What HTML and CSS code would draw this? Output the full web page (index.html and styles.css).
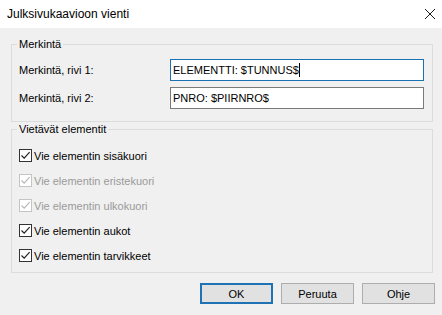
FILE: index.html
```html
<!DOCTYPE html>
<html lang="fi">
<head>
    <meta charset="UTF-8">
    <meta name="viewport" content="width=device-width, initial-scale=1.0">
    <title>Julksivukaavioon vienti</title>
    <link rel="stylesheet" href="styles.css">
</head>
<body>
    <div class="dialog">
        <div class="titlebar">
            <span class="title">Julksivukaavioon vienti</span>
            <svg class="close" width="12" height="12" viewBox="0 0 12 12">
                <path d="M1 1 L11 11 M11 1 L1 11" stroke="#1a1a1a" stroke-width="1" fill="none"/>
            </svg>
        </div>
        <div class="content">
            <fieldset class="group group-label">
                <legend>Merkintä</legend>
                <div class="field-row">
                    <label for="row1">Merkintä, rivi 1:</label>
                    <div class="textbox focused" id="row1">ELEMENTTI: $TUNNUS$<span class="caret"></span></div>
                </div>
                <div class="field-row">
                    <label for="row2">Merkintä, rivi 2:</label>
                    <div class="textbox" id="row2">PNRO: $PIIRNRO$</div>
                </div>
            </fieldset>

            <fieldset class="group group-export">
                <legend>Vietävät elementit</legend>
                <div class="check">
                    <span class="box"><svg viewBox="0 0 13 13"><path d="M2.5 6.5 L5.2 9.2 L10.6 3.2"/></svg></span>
                    <span>Vie elementin sisäkuori</span>
                </div>
                <div class="check disabled">
                    <span class="box"><svg viewBox="0 0 13 13"><path d="M2.5 6.5 L5.2 9.2 L10.6 3.2"/></svg></span>
                    <span>Vie elementin eristekuori</span>
                </div>
                <div class="check disabled">
                    <span class="box"><svg viewBox="0 0 13 13"><path d="M2.5 6.5 L5.2 9.2 L10.6 3.2"/></svg></span>
                    <span>Vie elementin ulkokuori</span>
                </div>
                <div class="check">
                    <span class="box"><svg viewBox="0 0 13 13"><path d="M2.5 6.5 L5.2 9.2 L10.6 3.2"/></svg></span>
                    <span>Vie elementin aukot</span>
                </div>
                <div class="check">
                    <span class="box"><svg viewBox="0 0 13 13"><path d="M2.5 6.5 L5.2 9.2 L10.6 3.2"/></svg></span>
                    <span>Vie elementin tarvikkeet</span>
                </div>
            </fieldset>

            <div class="buttons">
                <button class="default">OK</button>
                <button>Peruuta</button>
                <button>Ohje</button>
            </div>
        </div>
    </div>
</body>
</html>
```

FILE: styles.css
```css
body {
    margin: 0;
    padding: 0;
    font-family: "Liberation Sans", Arial, sans-serif;
    font-size: 11px;
    color: #000;
    background-color: #f0f0f0;
}
.dialog {
    width: 442px;
    height: 315px;
    background-color: #f0f0f0;
}
.titlebar {
    height: 28px;
    background-color: #fff;
    display: flex;
    align-items: center;
    justify-content: space-between;
    padding: 0 6px 0 7px;
}
.title {
    font-size: 12px;
    color: #000;
}
.close {
    display: block;
}
.content {
    padding: 9px 9px 0 11px;
}
.group {
    margin: 0;
    padding: 8px 8px 12px 7px;
    border: 1px solid #dcdcdc;
    min-width: 0;
}
.group legend {
    padding: 0 2px;
    margin-left: -2px;
    line-height: 14px;
}
.field-row {
    display: flex;
    align-items: center;
    height: 22px;
}
.field-row + .field-row {
    margin-top: 6px;
}
.field-row label {
    width: 151px;
}
.textbox {
    box-sizing: border-box;
    width: 254px;
    height: 22px;
    padding: 0 2px;
    line-height: 20px;
    border: 1px solid #7a7a7a;
    background-color: #fff;
    white-space: nowrap;
}
.textbox.focused {
    border-color: #1a73b0;
}
.caret {
    display: inline-block;
    width: 1px;
    height: 14px;
    background-color: #000;
    vertical-align: -3px;
}
.group-export {
    padding: 7px 8px 4px 7px;
}
.check {
    display: flex;
    align-items: center;
    height: 25px;
}
.box {
    box-sizing: border-box;
    width: 13px;
    height: 13px;
    border: 1px solid #333;
    background-color: #fff;
    margin-right: 2px;
    display: block;
}
.box svg {
    display: block;
    width: 13px;
    height: 13px;
    margin: -1px;
}
.box path {
    fill: none;
    stroke: #222;
    stroke-width: 1.2;
}
.check.disabled {
    color: #9a9a9a;
}
.check.disabled .box {
    border-color: #c4c4c4;
}
.check.disabled .box path {
    stroke: #b8b8b8;
}
.buttons {
    display: flex;
    justify-content: flex-end;
    gap: 8px;
    margin-top: 10px;
    margin-right: -2px;
}
.buttons button {
    box-sizing: border-box;
    width: 73px;
    height: 21px;
    padding: 0;
    font-family: inherit;
    font-size: 11px;
    color: #000;
    background-color: #e1e1e1;
    border: 1px solid #adadad;
}
.buttons button.default {
    border: 2px solid #1f72b3;
}
```
